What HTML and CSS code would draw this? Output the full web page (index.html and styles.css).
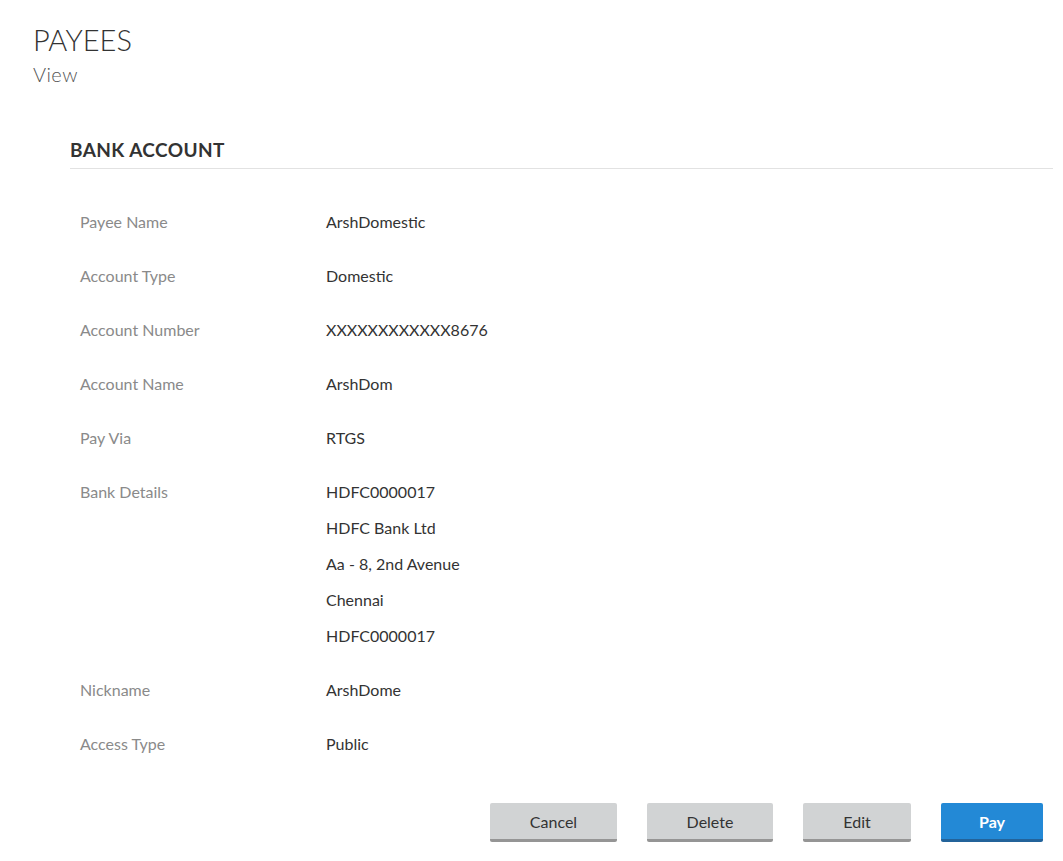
FILE: index.html
```html
<!DOCTYPE html>
<html lang="en">
<head>
<meta charset="utf-8">
<title>Payees - View</title>
<link rel="stylesheet" href="styles.css">
</head>
<body>
<div class="page">
  <header class="page-header">
    <h1 class="page-title">PAYEES</h1>
    <div class="page-subtitle">View</div>
  </header>
  <section class="panel">
    <h2 class="panel-title">BANK ACCOUNT</h2>
    <dl class="details">
      <div class="row"><dt>Payee Name</dt><dd>ArshDomestic</dd></div>
      <div class="row"><dt>Account Type</dt><dd>Domestic</dd></div>
      <div class="row"><dt>Account Number</dt><dd>XXXXXXXXXXXX8676</dd></div>
      <div class="row"><dt>Account Name</dt><dd>ArshDom</dd></div>
      <div class="row"><dt>Pay Via</dt><dd>RTGS</dd></div>
      <div class="row"><dt>Bank Details</dt>
        <dd class="multi">
          <span>HDFC0000017</span>
          <span>HDFC Bank Ltd</span>
          <span>Aa - 8, 2nd Avenue</span>
          <span>Chennai</span>
          <span>HDFC0000017</span>
        </dd>
      </div>
      <div class="row"><dt>Nickname</dt><dd>ArshDome</dd></div>
      <div class="row"><dt>Access Type</dt><dd>Public</dd></div>
    </dl>
    <div class="actions">
      <button class="btn btn-cancel">Cancel</button>
      <button class="btn btn-delete">Delete</button>
      <button class="btn btn-edit">Edit</button>
      <button class="btn btn-primary">Pay</button>
    </div>
  </section>
</div>
</body>
</html>
```

FILE: styles.css
```css
* { box-sizing: border-box; }
html, body { margin: 0; padding: 0; background: #ffffff; }
body {
  font-family: Lato, "Open Sans", "Liberation Sans", sans-serif;
  color: #333333;
}
.page { padding: 23px 10px 0 33px; }
.page-header { margin: 0; }
.page-title {
  margin: 0;
  font-weight: 300;
  font-size: 29px;
  line-height: 34px;
  color: #333;
}
.page-subtitle {
  font-weight: 300;
  font-size: 20px;
  line-height: 24px;
  margin-top: 5px;
  color: #555;
  letter-spacing: 0.4px;
}
.panel { margin: 0 0 0 37px; padding-top: 53px; }
.panel-title {
  margin: 0;
  font-weight: 700;
  font-size: 19px;
  line-height: 22px;
  letter-spacing: 0.4px;
  color: #333;
  padding-bottom: 7px;
  border-bottom: 1px solid #e2e2e2;
}
.details { margin: 0; padding: 44px 0 0 10px; }
.row { display: flex; margin-bottom: 36px; }
.row:last-child { margin-bottom: 0; }
.row dt {
  width: 246px;
  color: #8a8a8a;
  font-size: 16px;
  line-height: 18px;
}
.row dd {
  margin: 0;
  font-size: 16px;
  line-height: 18px;
  color: #333;
}
.row dd.multi { display: flex; flex-direction: column; gap: 18px; }
.actions {
  display: flex;
  justify-content: flex-end;
  gap: 30px;
  margin-top: 50px;
  padding-right: 10px;
}
.btn {
  font-family: inherit;
  font-size: 16px;
  height: 39px;
  border: none;
  border-radius: 2px;
  background: #d1d3d4;
  color: #333;
  border-bottom: 3px solid #959595;
  padding: 0;
  cursor: pointer;
}
.btn-cancel { width: 127px; }
.btn-delete { width: 126px; }
.btn-edit { width: 108px; }
.btn-primary {
  width: 102px;
  background: #2389d6;
  color: #fff;
  font-weight: 700;
  border-bottom-color: #23639a;
}
```
